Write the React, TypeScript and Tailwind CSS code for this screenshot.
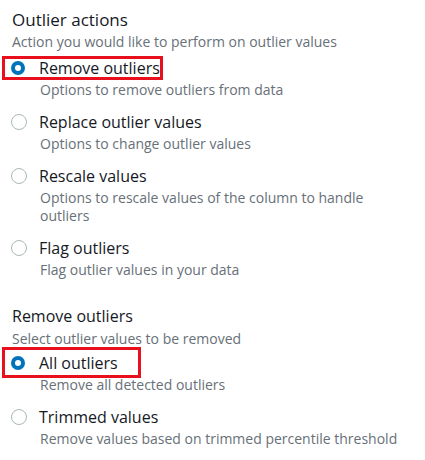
import React from "react";

interface Option {
    label: string;
    description: string;
    selected?: boolean;
    highlight?: string;
}

const actions: Option[] = [
    { label: "Remove outliers", description: "Options to remove outliers from data", selected: true, highlight: "top-[-1px] h-[24px] w-[161px]" },
    { label: "Replace outlier values", description: "Options to change outlier values" },
    { label: "Rescale values", description: "Options to rescale values of the column to handle outliers" },
    { label: "Flag outliers", description: "Flag outlier values in your data" },
];

const removeOptions: Option[] = [
    { label: "All outliers", description: "Remove all detected outliers", selected: true, highlight: "top-[-5px] h-[31px] w-[139px]" },
    { label: "Trimmed values", description: "Remove values based on trimmed percentile threshold" },
];

const Radio = ({ selected }: { selected?: boolean }) => (
    selected ? (
        <span className="w-[14px] h-[14px] rounded-full bg-[#0073bb] flex items-center justify-center shrink-0">
            <span className="w-[6px] h-[6px] rounded-full bg-white" />
        </span>
    ) : (
        <span className="w-[16px] h-[16px] rounded-full border-[1.5px] border-[#aab7b8] bg-white shrink-0" />
    )
);

const RadioOption = ({ option }: { option: Option }) => (
    <div className="relative flex flex-col">
        {option.highlight && (
            <div className={`absolute left-[-10px] border-[3px] border-[#e8101d] ${option.highlight}`} />
        )}
        <div className="flex items-center h-[22px]">
            <span className="w-[28px] flex items-center -ml-[1px]">
                <Radio selected={option.selected} />
            </span>
            <span className="text-[16px] leading-[22px] text-[#16191f]">{option.label}</span>
        </div>
        <p className="pl-[28px] mt-[2px] text-[14px] leading-[18px] text-[#687078] max-w-[390px]">
            {option.description}
        </p>
    </div>
);

const App = () => {
    return (
        <div className="w-[425px] h-[460px] bg-white px-[12px] pt-[8px] overflow-hidden" style={{ fontFamily: '"Open Sans", "Noto Sans", sans-serif' }}>

            {/* Outlier actions */}
            <div className="flex flex-col">
                <p className="text-[17px] leading-[24px] text-[#16191f]">Outlier actions</p>
                <p className="text-[14px] leading-[18px] mt-[1px] text-[#687078]">Action you would like to perform on outlier values</p>
                <div className="flex flex-col gap-[12px] mt-[6px]">
                    {actions.map((a, i) => (
                        <RadioOption key={i} option={a} />
                    ))}
                </div>
            </div>

            {/* Remove outliers */}
            <div className="flex flex-col mt-[26px]">
                <p className="text-[16px] leading-[22px] text-[#16191f]">Remove outliers</p>
                <p className="text-[14px] leading-[18px] mt-[3px] text-[#687078]">Select outlier values to be removed</p>
                <div className="flex flex-col gap-[12px] mt-[4px]">
                    {removeOptions.map((a, i) => (
                        <RadioOption key={i} option={a} />
                    ))}
                </div>
            </div>
        </div>
    )
}

export default App
